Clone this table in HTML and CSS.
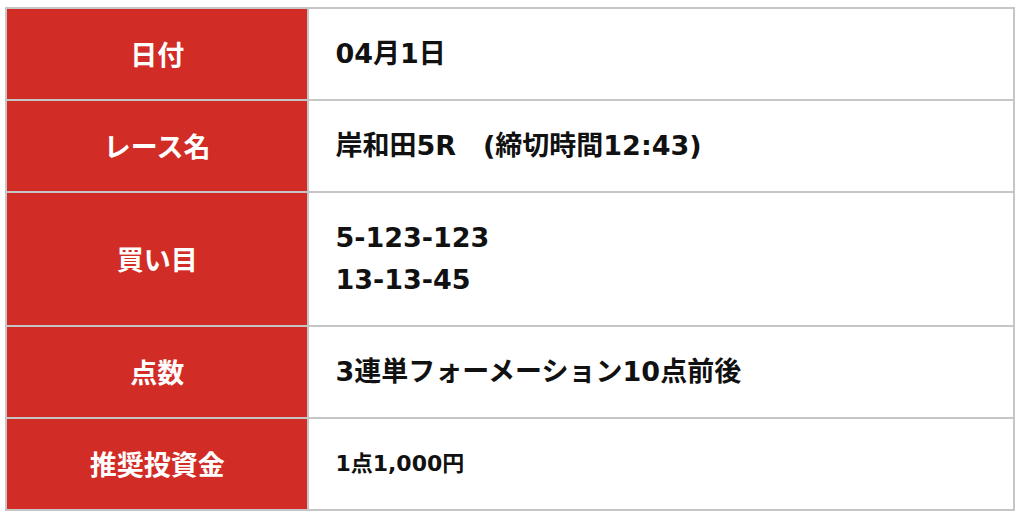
FILE: index.html
```html
<!DOCTYPE html>
<html lang="ja">
<head>
<meta charset="utf-8">
<title>予想</title>
<link rel="stylesheet" href="styles.css">
</head>
<body>
<div class="wrap">
<table class="info">
<tbody>
<tr><th>日付</th><td>04月1日</td></tr>
<tr><th>レース名</th><td>岸和田5R　(締切時間12:43)</td></tr>
<tr><th>買い目</th><td>5-123-123<br>13-13-45</td></tr>
<tr><th>点数</th><td>3連単フォーメーション10点前後</td></tr>
<tr><th>推奨投資金</th><td class="small">1点1,000円</td></tr>
</tbody>
</table>
</div>
</body>
</html>
```

FILE: styles.css
```css
html, body {
  margin: 0;
  padding: 0;
  background: #ffffff;
}
.wrap {
  padding: 7px 9px 0 5px;
}
.info {
  width: 100%;
  border-collapse: collapse;
  font-family: "DejaVu Sans", "Noto Sans CJK JP", sans-serif;
  font-weight: 700;
  font-size: 27px;
  line-height: 42px;
}
.info th,
.info td {
  border: 2px solid #c6c6c6;
  padding: 24px 25px;
}
.info th {
  width: 30%;
  background: #d22c26;
  color: #ffffff;
  text-align: center;
  padding-left: 0;
  padding-right: 0;
  font-family: "Noto Sans CJK JP", sans-serif;
}
.info td {
  color: #111111;
  text-align: left;
  padding-left: 26px;
}
.info td.small {
  font-size: 22px;
}
```
